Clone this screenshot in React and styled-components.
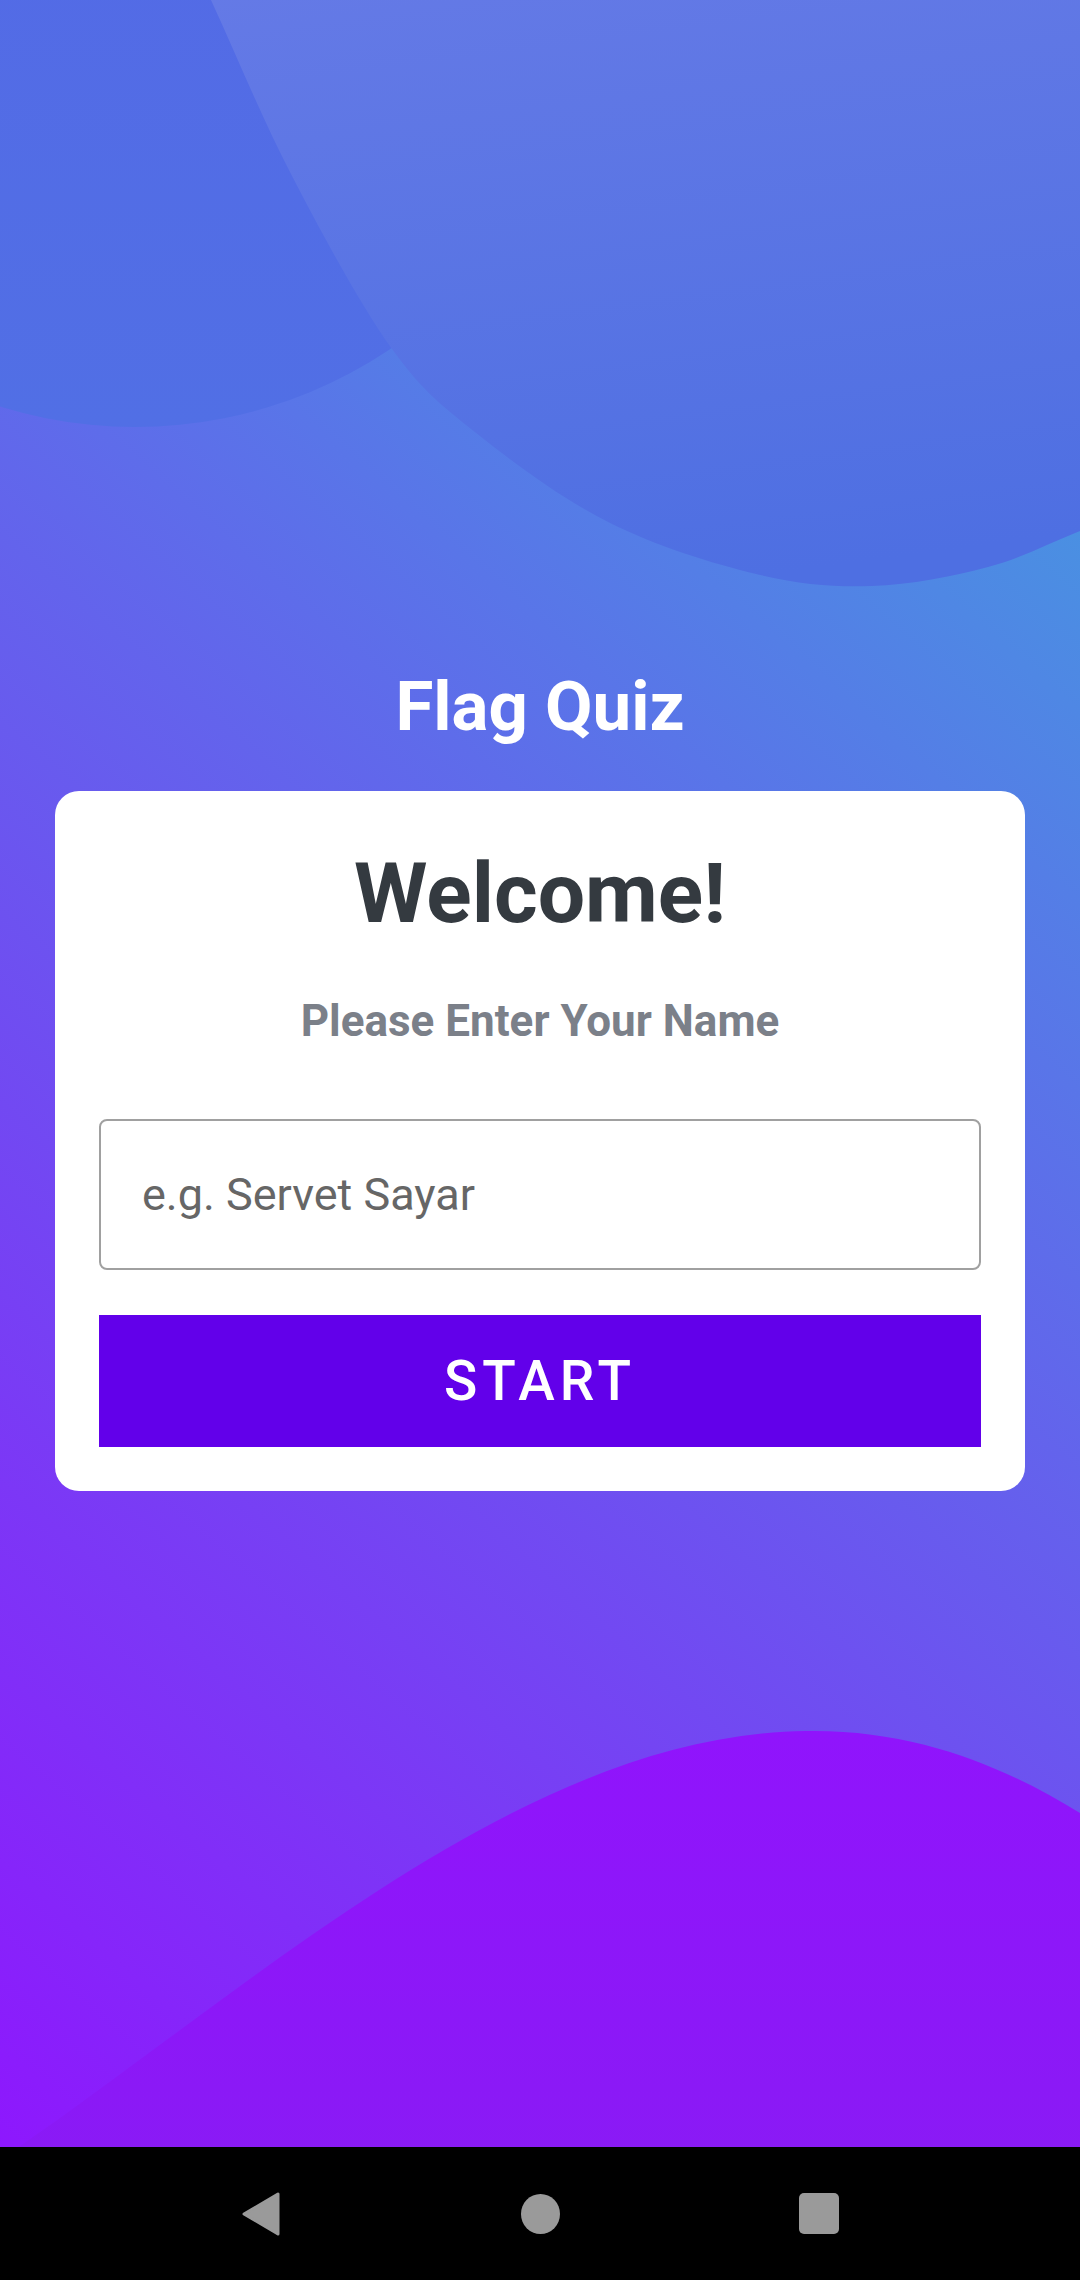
import React from 'react';
import styled, { createGlobalStyle } from 'styled-components';

const GlobalStyle = createGlobalStyle`
  html, body {
    margin: 0;
    padding: 0;
  }
  body {
    font-family: Roboto, "Noto Sans", sans-serif;
    background: #000;
  }
  * {
    box-sizing: border-box;
  }
`;

const Screen = styled.div`
  width: 1080px;
  height: 2280px;
  display: flex;
  flex-direction: column;
  overflow: hidden;
`;

const Content = styled.main`
  position: relative;
  flex: 1;
  display: flex;
  flex-direction: column;
  align-items: center;
  justify-content: center;
  padding-top: 15px;
  overflow: hidden;
  background: linear-gradient(221deg, #4a90e2 17%, #9013fe 103%);
`;

const Backdrop = styled.svg`
  position: absolute;
  inset: 0;
  width: 100%;
  height: 100%;
`;

const Title = styled.h1`
  position: relative;
  margin: 0;
  font-family: Roboto, sans-serif;
  font-size: 69px;
  font-weight: 700;
  line-height: 70px;
  color: #fff;
`;

const Card = styled.section`
  position: relative;
  width: 970px;
  margin-top: 49px;
  padding: 60px 44px 44px;
  background: #fff;
  border-radius: 24px;
  display: flex;
  flex-direction: column;
  align-items: center;
`;

const Heading = styled.h2`
  margin: 0;
  font-size: 84px;
  font-weight: 700;
  line-height: 86px;
  color: #343a40;
`;

const Subheading = styled.p`
  margin: 62px 0 0;
  font-size: 44px;
  font-weight: 700;
  line-height: 1;
  color: #7b8089;
`;

const NameInput = styled.input`
  width: 100%;
  height: 151px;
  margin-top: 76px;
  padding: 0 41px;
  border: 2px solid #a0a0a0;
  border-radius: 8px;
  font-family: Roboto, sans-serif;
  font-size: 45px;
  color: #222;
  outline: none;

  &::placeholder {
    color: #666;
  }
`;

const StartButton = styled.button`
  width: 100%;
  height: 132px;
  margin-top: 45px;
  border: none;
  border-radius: 0;
  background: #6200ea;
  color: #fff;
  font-family: Roboto, sans-serif;
  font-size: 55px;
  font-weight: 500;
  letter-spacing: 5px;
  text-transform: uppercase;
  cursor: pointer;
`;

const NavBar = styled.nav`
  height: 133px;
  flex-shrink: 0;
  background: #000;
  display: flex;
  align-items: center;
  justify-content: center;
  gap: 239px;
`;

const NavSlot = styled.div`
  width: 40px;
  height: 44px;
  display: flex;
  align-items: center;
  justify-content: center;
`;

const HomeDot = styled.div`
  width: 39px;
  height: 40px;
  border-radius: 50%;
  background: #9a9a9a;
`;

const RecentsSquare = styled.div`
  width: 41px;
  height: 41px;
  border-radius: 5px;
  background: #9a9a9a;
`;

const BackgroundArt = () => (
  <Backdrop viewBox="0 0 1080 2147" preserveAspectRatio="none">
    <defs>
      <linearGradient id="smallBlob" x1="0" y1="0" x2="0" y2="1">
        <stop offset="0" stopColor="#5567e6" />
        <stop offset="1" stopColor="#516fe5" />
      </linearGradient>
      <linearGradient id="bigBlob" x1="0.3" y1="0" x2="0.5" y2="1">
        <stop offset="0" stopColor="#657ae6" />
        <stop offset="1" stopColor="#4e6fe2" />
      </linearGradient>
      <linearGradient id="wave" x1="0" y1="0" x2="0" y2="1">
        <stop offset="0" stopColor="#9014fc" />
        <stop offset="1" stopColor="#8a1af5" />
      </linearGradient>
    </defs>
    <circle cx="135" cy="-30" r="457" fill="url(#smallBlob)" />
    <path
      fill="url(#bigBlob)"
      d="M 185 -60 L 211 0
         C 237.7 58, 260.8 115.8, 291 174
         C 321.2 232.2, 360.5 305.3, 392 349
         C 423.5 392.7, 443.7 407, 480 436
         C 516.3 465, 564 500, 610 523
         C 656 546, 712.3 563.5, 756 574
         C 799.7 584.5, 833.3 587.2, 872 586
         C 910.7 584.8, 953.3 576.2, 988 567
         C 1022.7 557.8, 1049.3 543, 1080 531
         C 1110 519, 1140 505, 1172 495
         L 1172 -60 Z"
    />
    <path
      fill="url(#wave)"
      d="M 0 2160
         C 250 1990, 520 1735, 806 1731
         C 920 1729, 1010 1770, 1080 1813
         L 1080 2147 L 0 2147 Z"
    />
  </Backdrop>
);

const BackIcon = () => (
  <svg width="40" height="44" viewBox="0 0 40 44">
    <polygon
      points="3,22 37,2 37,42"
      fill="#9a9a9a"
      stroke="#9a9a9a"
      strokeWidth="3"
      strokeLinejoin="round"
    />
  </svg>
);

const App = () => (
  <Screen>
    <GlobalStyle />
    <Content>
      <BackgroundArt />
      <Title>Flag Quiz</Title>
      <Card>
        <Heading>Welcome!</Heading>
        <Subheading>Please Enter Your Name</Subheading>
        <NameInput placeholder="e.g. Servet Sayar" />
        <StartButton>Start</StartButton>
      </Card>
    </Content>
    <NavBar>
      <NavSlot>
        <BackIcon />
      </NavSlot>
      <NavSlot>
        <HomeDot />
      </NavSlot>
      <NavSlot>
        <RecentsSquare />
      </NavSlot>
    </NavBar>
  </Screen>
);

export default App;
